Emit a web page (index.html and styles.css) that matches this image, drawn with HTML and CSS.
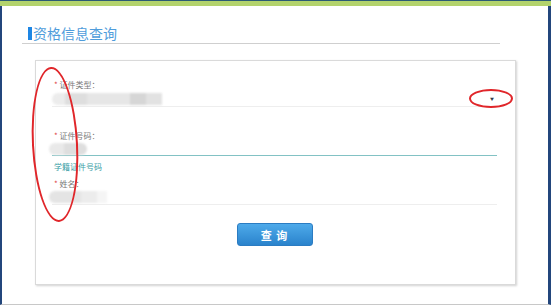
FILE: index.html
```html
<!DOCTYPE html>
<html lang="zh-CN">
<head>
  <meta charset="UTF-8" />
  <title>资格信息查询</title>
  <meta name="viewport" content="width=device-width, initial-scale=1.0" />
  <link rel="stylesheet" href="styles.css">
</head>
<body>

  <div class="top-bar"></div>

  <div class="frame">
    <div class="page-title"><span class="title-mark"></span>资格信息查询</div>

    <div class="query-card">
      <div class="field field-first">
        <div class="field-label"><span class="req">*</span> 证件类型：</div>
        <div class="field-input select-input">
          <span class="blur-value value-type"></span>
          <span class="select-arrow">▼</span>
        </div>
      </div>

      <div class="field field-second">
        <div class="field-label"><span class="req">*</span> 证件号码：</div>
        <div class="field-input active-input">
          <span class="blur-value value-id"></span>
        </div>
      </div>

      <a class="hint-link" href="#">学籍证件号码</a>

      <div class="field field-third">
        <div class="field-label"><span class="req">*</span> 姓名：</div>
        <div class="field-input name-input">
          <span class="blur-value value-name"></span>
        </div>
      </div>

      <div class="actions">
        <button class="query-button" type="button">查 询</button>
      </div>

      <!-- red marks drawn over the form -->
      <span class="mark mark-left"></span>
      <span class="mark mark-arrow"></span>
    </div>
  </div>

</body>
</html>
```

FILE: styles.css
```css
html, body {
  margin: 0;
  padding: 0;
  background: white;
  font-family: "Noto Sans CJK SC", "Noto Sans", sans-serif;
}

.top-bar {
  height: 5px;
  border-top: 1px solid #2c5b74;
  background: #b3d36c;
}

.frame {
  height: 299px;
  box-sizing: border-box;
  border-left: 2px solid #23467c;
  border-right: 3px solid #23467c;
  border-bottom: 1px solid #c8c8c8;
  overflow: hidden;
}

/* title row */
.page-title {
  display: flex;
  align-items: center;
  width: 472px;
  margin: 19px 0 0 20px;
  padding: 0 0 2px 6px;
  border-bottom: 1px solid #cfcfcf;
  font-size: 14px;
  line-height: 16px;
  color: #4f9cdb;
}

.title-mark {
  width: 4px;
  height: 13px;
  margin-right: 1px;
  background: #1e86e4;
}

/* form card */
.query-card {
  position: relative;
  width: 481px;
  height: 225px;
  margin: 16px 0 0 33px;
  padding: 0 18px 0 16px;
  box-sizing: border-box;
  border: 1px solid #dadada;
  box-shadow: 1px 1px 2px rgba(0, 0, 0, 0.18);
}

.field-label {
  padding-left: 2px;
  font-size: 8px;
  line-height: 12px;
  color: #7a7a7a;
}

.req {
  color: #e04545;
}

.field-first { padding-top: 18px; }
.field-second { padding-top: 23px; }
.field-third { padding-top: 5px; }

.field-input {
  display: flex;
  align-items: center;
  justify-content: space-between;
  border-bottom: 1px solid #eeeeee;
}

.select-input { height: 15px; }
.active-input { height: 13px; border-bottom-color: #82c2c4; }
.name-input { height: 14px; }

.blur-value {
  display: block;
  height: 12px;
  border-radius: 6px 0 0 6px;
  filter: blur(0.8px);
}

.value-type {
  width: 110px;
  margin-top: 1px;
  background: linear-gradient(to right,
    #ececec 0, #ececec 13px,
    #dedede 13px, #dedede 35px,
    #e6e6e6 35px, #e6e6e6 78px,
    #d6d6d6 78px, #d6d6d6 94px,
    #e2e2e2 94px);
}

.value-id {
  width: 38px;
  margin-left: -3px;
  border-radius: 6px;
  background: linear-gradient(to right, #e9e9e9 0, #e9e9e9 15px, #dedede 15px);
}

.value-name {
  width: 58px;
  margin-left: -3px;
  background: linear-gradient(to right,
    #e4e4e4 0, #e4e4e4 32px,
    #ececec 32px, #ececec 48px,
    #f5f5f5 48px);
}

.select-arrow {
  margin-right: 3px;
  font-size: 4px;
  line-height: 4px;
  color: #333a4a;
}

.hint-link {
  display: block;
  margin-top: 5px;
  padding-left: 2px;
  font-size: 8px;
  line-height: 12px;
  color: #3a9ea6;
  text-decoration: none;
}

.actions {
  display: flex;
  justify-content: center;
  margin-top: 18px;
}

.query-button {
  width: 76px;
  height: 23px;
  padding: 0;
  border: 1px solid #2b7cc2;
  border-radius: 3px;
  background: linear-gradient(to bottom, #4eaaea, #2a83cc);
  color: white;
  font-family: inherit;
  font-size: 11px;
  font-weight: bold;
  letter-spacing: 1px;
  cursor: pointer;
}

/* annotation ellipses */
.mark {
  position: absolute;
  border: 2px solid #e0262a;
  border-radius: 50%;
  box-sizing: border-box;
}

.mark-left {
  left: -4px;
  top: 6px;
  width: 46px;
  height: 155px;
  transform: rotate(-3deg);
}

.mark-arrow {
  left: 433px;
  top: 28px;
  width: 44px;
  height: 19px;
}
```
